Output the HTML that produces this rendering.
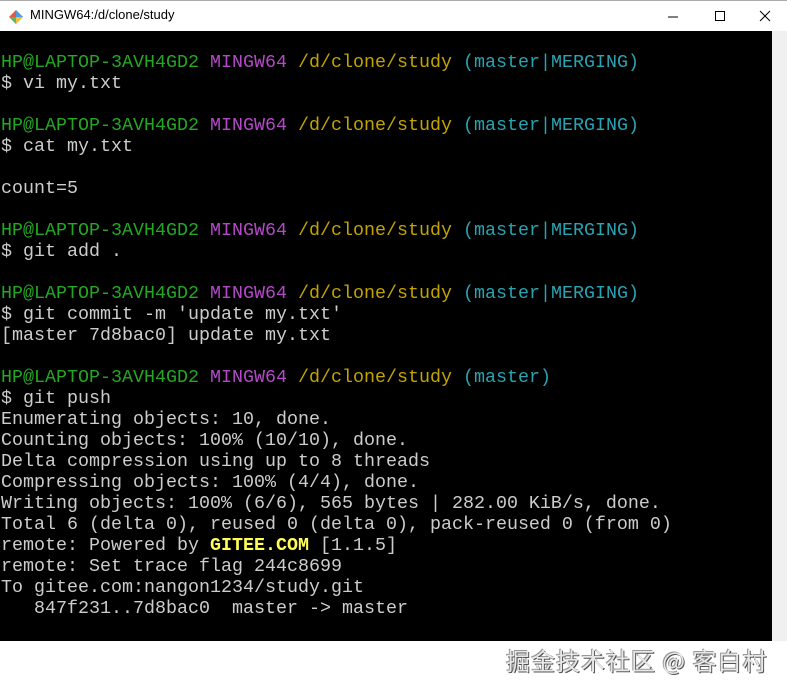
<!DOCTYPE html>
<html><head><meta charset="utf-8"><style>
html,body{margin:0;padding:0;width:787px;height:691px;background:#fff;overflow:hidden;position:relative}
.title{position:absolute;left:0;top:0;width:787px;height:31px;background:#fff;border-top:1px solid #aaa;box-sizing:border-box}
.title .t{position:absolute;left:30px;top:6px;font:13px "Liberation Sans",sans-serif;color:#000}
.term{position:absolute;left:0;top:31px;width:772px;height:610px;background:#000}
.sb{position:absolute;left:772px;top:31px;width:15px;height:610px;background:#f0f0f0}
pre{margin:0;position:absolute;left:1px;top:52px;font:18.33px/21px "Liberation Mono",monospace;color:#cccccc;white-space:pre}
.g{color:#23a823}.m{color:#b449c8}.y{color:#c3a300}.c{color:#2aa3b2}.b{color:#ffff55;font-weight:bold}
.wm{position:absolute;left:506px;top:642px;font:24px "Noto Sans CJK SC",sans-serif;color:#e8e8e8;text-shadow:1px 1px 0 #555,-1px -1px 0 #999;letter-spacing:1px;white-space:nowrap}
</style></head><body>
<div class="title">
<svg style="position:absolute;left:8px;top:8px" width="16" height="16" viewBox="0 0 16 16"><path d="M8 1 L15 8 L8 15 L1 8Z" fill="#e05a4a"/><path d="M8 1 L15 8 L8 8Z" fill="#4a9de0"/><path d="M1 8 L8 8 L8 15Z" fill="#5cb85c"/><path d="M8 8 L15 8 L8 15Z" fill="#f0c040"/></svg>
<span class="t">MINGW64:/d/clone/study</span>
<svg style="position:absolute;left:667px;top:10px" width="12" height="12"><line x1="1" y1="6" x2="11" y2="6" stroke="#000"/></svg>
<svg style="position:absolute;left:714px;top:9px" width="12" height="12"><rect x="1.5" y="1.5" width="9" height="9" fill="none" stroke="#000"/></svg>
<svg style="position:absolute;left:759px;top:9px" width="12" height="12"><path d="M1 1L11 11M11 1L1 11" stroke="#000"/></svg>
</div>
<div class="term"></div><div class="sb"></div>
<pre><span class="g">HP@LAPTOP-3AVH4GD2</span> <span class="m">MINGW64</span> <span class="y">/d/clone/study</span> <span class="c">(master|MERGING)</span>
$ vi my.txt

<span class="g">HP@LAPTOP-3AVH4GD2</span> <span class="m">MINGW64</span> <span class="y">/d/clone/study</span> <span class="c">(master|MERGING)</span>
$ cat my.txt

count=5

<span class="g">HP@LAPTOP-3AVH4GD2</span> <span class="m">MINGW64</span> <span class="y">/d/clone/study</span> <span class="c">(master|MERGING)</span>
$ git add .

<span class="g">HP@LAPTOP-3AVH4GD2</span> <span class="m">MINGW64</span> <span class="y">/d/clone/study</span> <span class="c">(master|MERGING)</span>
$ git commit -m 'update my.txt'
[master 7d8bac0] update my.txt

<span class="g">HP@LAPTOP-3AVH4GD2</span> <span class="m">MINGW64</span> <span class="y">/d/clone/study</span> <span class="c">(master)</span>
$ git push
Enumerating objects: 10, done.
Counting objects: 100% (10/10), done.
Delta compression using up to 8 threads
Compressing objects: 100% (4/4), done.
Writing objects: 100% (6/6), 565 bytes | 282.00 KiB/s, done.
Total 6 (delta 0), reused 0 (delta 0), pack-reused 0 (from 0)
remote: Powered by <span class="b">GITEE.COM</span> [1.1.5]
remote: Set trace flag 244c8699
To gitee.com:nangon1234/study.git
   847f231..7d8bac0  master -&gt; master</pre>
<div class="wm">掘金技术社区 @ 客白村</div>
</body></html>
